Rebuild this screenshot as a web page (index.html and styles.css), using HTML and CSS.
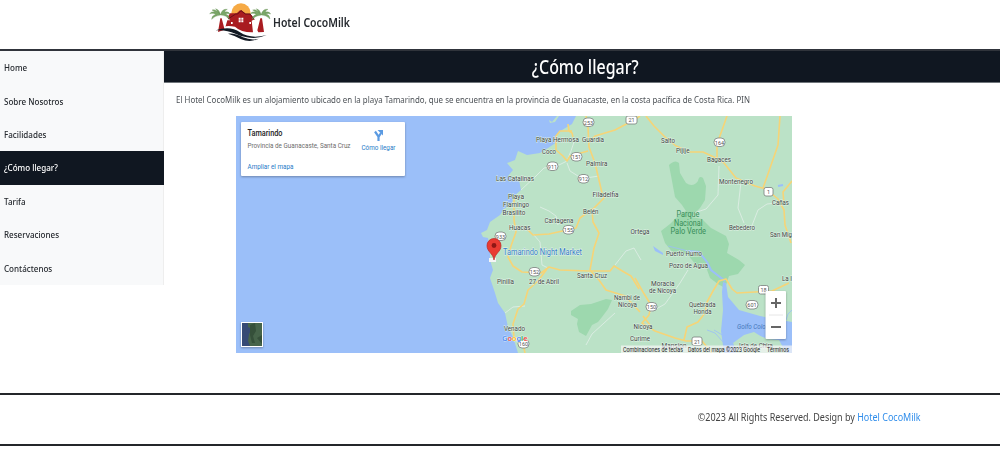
FILE: index.html
```html
<!DOCTYPE html>
<html lang="es">
<head>
<meta charset="utf-8">
<title>Hotel CocoMilk</title>
<link rel="stylesheet" href="styles.css">
</head>
<body>
<header class="header">
  <svg class="logo" viewBox="0 0 192 126" aria-hidden="true">
    <circle cx="96" cy="39" r="29" fill="#f6aa45"/>
    <path fill="#a91c20" d="M27 96 34 55h4l9 34zM145 91 154 55h5l6 41-17 1zM49 82 55 61h9L55 53l8-13h20l10-9h4l14 10h13l13 17-9 4 4 35q-35 1-54-17-19-4-29-1z"/>
    <path fill="none" stroke="#650f17" stroke-width="3" d="m57 57 23-15h6l10-10 13 10h14l12 16"/>
    <path fill="#fff" d="M89 53h6v6h-6zM97 53h6v6h-6zM89 61h6v6h-6zM97 61h6v6h-6zM66 66h5v6h-5zM121 66h5v6h-5z"/>
    <g id="palm" fill="#79a667" stroke="#668f56" stroke-width="1">
      <path d="M34 44Q20 25 9 30q5 3 9 6Q6 34 2 41q11-3 18 3Q8 46 8 58q8-11 27-13 15 0 26 12-1-13-13-15 8-3 15 0-4-9-16-6 2-6 8-8-15-3-21 16-2-15-14-18 6 10 14 18z"/>
    </g>
    <use href="#palm" x="122"/>
    <path fill="#111923" d="M20 91q44-15 73 6 32 21 80 8-29 13-59 7-18-3-35-11-28-13-59-10z"/>
    <path fill="#111923" d="M57 101q21-2 45 11 24 10 47 4-25 13-54 1-20-11-38-16z"/>
  </svg>
  <span class="brand">Hotel CocoMilk</span>
</header>
<div class="layout">
  <nav class="sidebar">
    <a class="item"><span>Home</span></a>
    <a class="item"><span>Sobre Nosotros</span></a>
    <a class="item"><span>Facilidades</span></a>
    <a class="item active"><span>¿Cómo llegar?</span></a>
    <a class="item"><span>Tarifa</span></a>
    <a class="item"><span>Reservaciones</span></a>
    <a class="item"><span>Contáctenos</span></a>
  </nav>
  <main class="content">
    <h1 class="title"><span>¿Cómo llegar?</span></h1>
    <p class="intro">El Hotel CocoMilk es un alojamiento ubicado en la playa Tamarindo, que se encuentra en la provincia de Guanacaste, en la costa pacífica de Costa Rica. PIN</p>
    <svg class="map" viewBox="236 116 556 237" width="556" height="237">
      <rect class="sea" x="236" y="116" width="556" height="237"/>
      <path class="land" d="M576 116 572 124 562 130 556 136 557 142 548 148 540 153 527 155 518 151 515 160 507 163 513 170 508 176 519 180 521 190 514 196 512 203 504 209 500 215 490 222 487 230 481 233 483 237 488 238 490 250 490 260 493 270 490 278 495 293 498 303 505 313 508 327 513 337 518 353H792V116z"/>
      <path class="land" d="M549 120l3 2 5-6h2l-4 6-5 1z"/>
      <path class="park" d="M669 165q6-6 10-2l1 10 6 10q7 5 12-2 1-6 5-3l3 8-1 14-5 8-9 9 11 2 9 9 15 8 3 8-2 9 12 7 6 5-7 9-9 2-4 12q-8-4-15-10l-4-11-10-2-8-10-8-3-6 2-9-11-4-12 9-7 9-9 7-4-4-6-7-8z"/>
      <path class="park" d="M571 311 580 305 591 304 606 299 612 300 608 309 602 317 598 322 592 325 586 336 579 332 577 324 578 319 571 315z"/>
      <path class="water" d="M723 282 726 283 728 297 739 310 760 316 792 322V353H765L762 337 754 332 744 335 733 343 737 353H724L721 331 723 310 722 292z"/>
      <path class="land" d="M735 353 741 339 754 334 768 339 779 340 786 353z"/>
      <path class="water" d="M653 246l10 7v2l-8-4z"/>
      <path class="river" d="M688 251 699 252 707 262 711 270 725 281M778 186l5-1"/>
      <path class="stream" d="M668 246 688 251M724 343l-9-10-8-3M724 336l-10-6M786 320l2-6 4-4"/>
      <g class="minor">
        <path d="M574 142 571 151 567 161 557 166 544 168 536 176 521 190M567 163 570 171 578 176 586 178 599 176M540 207 549 211 556 216 558 225M533 234 540 242 542 265 548 268M615 265 626 251 634 248 641 260M719 166 718 195 706 209 694 213M741 182 738 208 744 223M751 228 758 210 767 204 786 202M505 313 513 307 525 306M586 345 592 334 615 313M688 270 680 283 665 304 649 313"/>
      </g>
      <g id="roads">
        <path d="M586 116 588 127 589 147 595 163 602 193 604 198 592 210 593 222 599 233 594 248 590 270 599 280 606 290 625 296 640 312M589 142 595 136 615 130 634 120 640 116M646 116 654 126 665 137 676 146 690 152 703 152 716 158 724 163 736 178 755 186 766 189 778 199 784 210 785 225 791 243"/>
        <path d="M568 124 569 131 572 133 573 137M572 131 560 131 556 136 556 150 563 156 567 161 570 156 588 151M592 209 580 218 576 228 549 234 533 235 526 228M514 196 514 220 516 232 511 246 508 257 513 266 522 272 541 273 549 267 560 270 589 271 610 271 614 266 624 272 631 276 639 289M547 269 538 281 528 290 524 304 518 309 513 324 514 338 523 344 525 353"/>
        <path d="M727 116 721 133 717 144 717 158M780 116 778 145 769 171 763 188M792 181 783 192 784 204M635 278 643 292 651 305 649 315 642 323 655 331 675 338 686 341 702 341 712 353M684 340 687 327 698 322 705 313 707 302 713 291 719 281 726 279 732 289 737 293 772 291 789 283M650 325 643 316"/>
      </g>
      <g class="shields">
        <rect x="583" y="118" width="11" height="8.500" rx="4"/><rect x="626" y="116" width="11" height="8" rx="2"/>
        <rect x="571" y="152.500" width="11" height="8.500" rx="4"/><rect x="547" y="162" width="11" height="8.500" rx="4"/><rect x="578" y="174.500" width="11" height="8.500" rx="4"/><rect x="563" y="225.500" width="11" height="8.500" rx="4"/><rect x="495" y="232" width="11" height="8.500" rx="4"/><rect x="529" y="267.500" width="11" height="8.500" rx="4"/><rect x="518" y="339.500" width="11" height="8.500" rx="4"/><rect x="714" y="138" width="11" height="8.500" rx="4"/><rect x="764" y="187.500" width="9" height="8.500" rx="2"/><rect x="646" y="302.500" width="11" height="8.500" rx="4"/><rect x="692" y="337" width="10" height="8.500" rx="2"/><rect x="758.500" y="285.500" width="10" height="8.500" rx="2"/><rect x="746" y="300.500" width="12" height="8.500" rx="4"/>
      </g>
      <g class="numbers">
        <text x="588.5" y="124.500">253</text><text x="631.5" y="122">21</text><text x="576.5" y="159">151</text><text x="552.5" y="168.500">911</text><text x="583.5" y="181">912</text><text x="568.5" y="232">155</text><text x="500.5" y="238.500">933</text><text x="534.5" y="274">152</text><text x="523.5" y="346">160</text><text x="719.5" y="144.500">164</text><text x="768.5" y="194">1</text><text x="651.5" y="309">150</text><text x="697" y="343.500">21</text><text x="763.5" y="292">18</text><text x="752" y="307">601</text>
      </g>
      <g class="places">
        <text x="536" y="142.300" textLength="43" lengthAdjust="spacingAndGlyphs">Playa Hermosa</text>
        <text x="582" y="142.300" textLength="22" lengthAdjust="spacingAndGlyphs">Guardia</text>
        <text x="542" y="153.800" textLength="14" lengthAdjust="spacingAndGlyphs">Coco</text>
        <text x="586" y="166" textLength="21.500" lengthAdjust="spacingAndGlyphs">Palmira</text>
        <text x="496" y="181" textLength="38" lengthAdjust="spacingAndGlyphs">Las Catalinas</text>
        <text x="592.500" y="197" textLength="26" lengthAdjust="spacingAndGlyphs">Filadelfia</text>
        <text x="508" y="199.300" textLength="16" lengthAdjust="spacingAndGlyphs">Playa</text>
        <text x="503" y="206.700" textLength="26" lengthAdjust="spacingAndGlyphs">Flamingo</text>
        <text x="502.500" y="215" textLength="23" lengthAdjust="spacingAndGlyphs">Brasilito</text>
        <text x="583" y="213.500" textLength="15.500" lengthAdjust="spacingAndGlyphs">Belén</text>
        <text x="544.500" y="223.300" textLength="29" lengthAdjust="spacingAndGlyphs">Cartagena</text>
        <text x="509" y="229.800" textLength="21.500" lengthAdjust="spacingAndGlyphs">Huacas</text>
        <text x="661" y="143" textLength="14" lengthAdjust="spacingAndGlyphs">Salto</text>
        <text x="676" y="153" textLength="13.500" lengthAdjust="spacingAndGlyphs">Pijije</text>
        <text x="707" y="161.500" textLength="24" lengthAdjust="spacingAndGlyphs">Bagaces</text>
        <text x="719" y="183.500" textLength="34" lengthAdjust="spacingAndGlyphs">Montenegro</text>
        <text x="772" y="204.800" textLength="17" lengthAdjust="spacingAndGlyphs">Cañas</text>
        <text x="630.500" y="234" textLength="19" lengthAdjust="spacingAndGlyphs">Ortega</text>
        <text x="729" y="230.300" textLength="26" lengthAdjust="spacingAndGlyphs">Bebedero</text>
        <text x="770" y="237.300" textLength="22" lengthAdjust="spacingAndGlyphs">San Mig</text>
        <text x="666" y="256" textLength="36" lengthAdjust="spacingAndGlyphs">Puerto Humo</text>
        <text x="669" y="267.500" textLength="39" lengthAdjust="spacingAndGlyphs">Pozo de Agua</text>
        <text x="651" y="286" textLength="23.500" lengthAdjust="spacingAndGlyphs">Moracia</text>
        <text x="649" y="293" textLength="27" lengthAdjust="spacingAndGlyphs">de Nicoya</text>
        <text x="497" y="284" textLength="17" lengthAdjust="spacingAndGlyphs">Pinilla</text>
        <text x="529" y="283.500" textLength="30" lengthAdjust="spacingAndGlyphs">27 de Abril</text>
        <text x="577" y="277.500" textLength="30" lengthAdjust="spacingAndGlyphs">Santa Cruz</text>
        <text x="614" y="300" textLength="26" lengthAdjust="spacingAndGlyphs">Nambi de</text>
        <text x="618" y="307" textLength="19" lengthAdjust="spacingAndGlyphs">Nicoya</text>
        <text x="689" y="307" textLength="26.500" lengthAdjust="spacingAndGlyphs">Quebrada</text>
        <text x="693.500" y="314" textLength="18" lengthAdjust="spacingAndGlyphs">Honda</text>
        <text x="633.500" y="328.800" textLength="19" lengthAdjust="spacingAndGlyphs">Nicoya</text>
        <text x="630" y="340.500" textLength="20" lengthAdjust="spacingAndGlyphs">Curime</text>
        <text x="504" y="331" textLength="21" lengthAdjust="spacingAndGlyphs">Venado</text>
        <text x="782" y="281" textLength="10" lengthAdjust="spacingAndGlyphs">La I</text>
        <text x="661.500" y="348" textLength="25" lengthAdjust="spacingAndGlyphs">Mansion</text>
        <text x="739" y="348" textLength="34" lengthAdjust="spacingAndGlyphs">Isla de Chira</text>
      </g>
      <g class="park-label">
        <text x="676.500" y="217" textLength="23" lengthAdjust="spacingAndGlyphs">Parque</text>
        <text x="674" y="225.500" textLength="28.500" lengthAdjust="spacingAndGlyphs">Nacional</text>
        <text x="670.500" y="234" textLength="35.500" lengthAdjust="spacingAndGlyphs">Palo Verde</text>
      </g>
      <text class="gulf" x="737" y="328.500" textLength="34" lengthAdjust="spacingAndGlyphs">Golfo Colora</text>
      <text class="market" x="503" y="254.800" textLength="79" lengthAdjust="spacingAndGlyphs">Tamarindo Night Market</text>
      <path fill="#f5f5f5" d="M489 258h7v4h-7z"/>
      <path fill="#e93b32" stroke="#bd2525" stroke-width=".7" d="M494 260c-1-7-7-8-7-14.500a7 7 0 0 1 14 0c0 6.500-6 7.500-7 14.500z"/><circle cx="494" cy="245.500" r="2.400" fill="#8e1715"/>
      <text class="google" x="502" y="340.500"><tspan fill="#4285f4">G</tspan><tspan fill="#ea4335">o</tspan><tspan fill="#fbbc05">o</tspan><tspan fill="#4285f4">g</tspan><tspan fill="#34a853">l</tspan><tspan fill="#ea4335">e</tspan></text>
      <rect x="621" y="345.500" width="171" height="7.500" fill="#f5f5f5" opacity=".72"/>
      <g class="legal"><text x="623" y="351.500" textLength="60" lengthAdjust="spacingAndGlyphs">Combinaciones de teclas</text><text x="688" y="351.500" textLength="72" lengthAdjust="spacingAndGlyphs">Datos del mapa ©2023 Google</text><text x="767" y="351.500" textLength="22" lengthAdjust="spacingAndGlyphs">Términos</text></g>
      <g class="card"><rect x="241" y="122" width="164" height="54" rx="1"/></g>
      <g class="card-text">
        <text class="place" x="247.500" y="135.500" textLength="35" lengthAdjust="spacingAndGlyphs">Tamarindo</text>
        <text class="muted" x="247.500" y="148" textLength="103" lengthAdjust="spacingAndGlyphs">Provincia de Guanacaste, Santa Cruz</text>
        <text class="link" x="247.500" y="168.700" textLength="46" lengthAdjust="spacingAndGlyphs">Ampliar el mapa</text>
        <text class="link" x="361.500" y="150.300" textLength="34" lengthAdjust="spacingAndGlyphs">Cómo llegar</text>
      </g>
      <path fill="none" stroke="#5a9ae2" stroke-width="2.200" d="M378.500 141v-4.500l-3.500-5M378.500 137l2.500-4"/><path fill="#5a9ae2" d="M377.500 130h5.500v5.500z"/>
      <g class="card"><rect x="241" y="322" width="22" height="25"/></g>
      <rect x="242" y="323" width="20" height="23" fill="#364a75"/><path fill="#46644a" d="M248 323h14v23h-12l-2-5 1-7 3-5-4-2z"/><path fill="#35503a" d="M250 325l5-2 1 8-3 5 2 7h-3l-2-8zM257 338l5-3v9z"/>
      <g class="card"><rect x="765.500" y="291" width="20.500" height="48" rx="1"/></g>
      <path stroke="#666" stroke-width="2" d="M771 303h10M776 298v10M771 327h10"/><path stroke="#e6e6e6" d="M769 315h14"/>
    </svg>
  </main>
</div>
<footer class="footer"><span class="copy">©2023 All Rights Reserved. Design by <a>Hotel CocoMilk</a></span></footer>
</body>
</html>
```
FILE: styles.css
```css
* { box-sizing: border-box; }
body { margin: 0; height: 450px; overflow: hidden; background: #fff; color: #25292e; font: 9.5px "Noto Sans", "Open Sans", sans-serif; }
.header { height: 51px; padding-left: 209px; display: flex; border-bottom: 2px solid #30343b; }
.logo { width: 64px; height: 42px; flex: none; }
.brand { margin-top: 15px; height: 16px; line-height: 16px; font-size: 12px; font-weight: 600; transform: scaleX(.871); transform-origin: left; }
.layout { display: flex; align-items: flex-start; height: 342px; }
.sidebar { width: 164px; height: 234px; background: #f8f9fa; border-right: 1px solid #eee; flex: none; display: grid; grid-template-rows: repeat(7, 1fr); }
.item { display: flex; align-items: center; padding-left: 4px; font-weight: 500; }
.item span { transform: scaleX(.847); transform-origin: left; }
.active { background: #101721; color: #fff; margin-right: -1px; }
.content { flex: 1; }
.title { height: 32px; margin: 0; padding-left: 7px; display: flex; align-items: center; justify-content: center; background: #101721; border-bottom: 1px solid #70767b; color: #fff; font-size: 19.5px; font-weight: 500; }
.title span { transform: scaleX(.818); }
.intro { width: max-content; height: 14px; line-height: 14px; margin: 10px 0 9px 12px; color: #4c5156; transform: scaleX(.834); transform-origin: left; }
.map { display: block; margin-left: 72px; }
.footer { height: 53px; border-top: 2px solid #24262a; border-bottom: 2px solid #24262a; display: flex; align-items: center; justify-content: flex-end; padding: 0 79px 5px 0; color: #444; font-size: 10.5px; }
.copy { transform: scaleX(.855); transform-origin: right; }
.footer a { color: #2f8deb; }
.sea, .water { fill: #9bbff9; }
.land { fill: #bbe2c7; }
.park { fill: #9dd8ae; }
.river { fill: none; stroke: #9bbff9; stroke-width: 2; }
.stream { fill: none; stroke: #9bbff9; stroke-width: .8; }
.minor path { fill: none; stroke: #e2efe8; stroke-width: .8; }
#roads { fill: none; stroke: #f6d477; stroke-width: 1.6; stroke-linejoin: round; }
.shields rect { fill: #fff; stroke: #777e7b; stroke-width: .8; }
.map text { font-family: Roboto, sans-serif; }
.numbers { fill: #555; font-size: 5.5px; text-anchor: middle; }
.places { fill: #404643; font-size: 7.6px; stroke: #e3f3e8; stroke-width: 1px; paint-order: stroke; }
.park-label { fill: #388e59; font-size: 8.2px; }
.gulf { fill: #4577bb; font-size: 7px; font-style: italic; }
.market { fill: #337dc9; font-size: 8.6px; stroke: #e3f3e8; stroke-width: 1px; paint-order: stroke; }
.google { font-size: 8px; font-weight: 500; stroke: #fff; stroke-width: .6px; paint-order: stroke; }
.legal { fill: #222; font-size: 6.4px; }
.card { fill: #fff; filter: drop-shadow(0 1px 1px rgba(0, 0, 0, .3)); }
.card-text { font-size: 7.8px; }
.place { fill: #222; font-size: 8.6px; font-weight: 500; }
.muted { fill: #6c6c6c; }
.link { fill: #277bc8; }
```
